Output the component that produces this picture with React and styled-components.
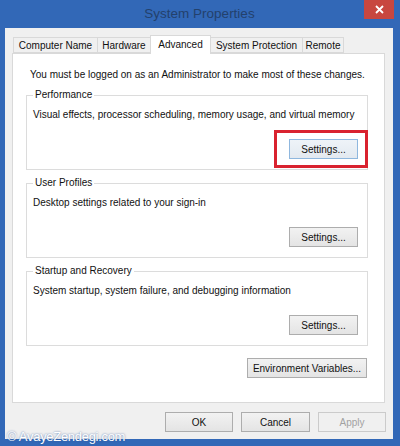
import React from 'react';
import styled, { createGlobalStyle } from 'styled-components';

const GlobalStyle = createGlobalStyle`
  html, body {
    margin: 0;
    padding: 0;
    background: #3268b7;
  }
  body {
    font-family: "Liberation Sans", Arial, sans-serif;
  }
`;

const Window = styled.div`
  position: relative;
  width: 400px;
  height: 446px;
  box-sizing: border-box;
  background: #3268b7;
  padding: 0 7px 7px 5px;
  display: flex;
  flex-direction: column;
`;

const TitleBar = styled.div`
  height: 28px;
  display: flex;
  align-items: flex-start;
`;

const Title = styled.div`
  flex: 1;
  padding-left: 30px;
  text-align: center;
  line-height: 28px;
  font-size: 13.5px;
  color: #23416c;
`;

const CloseButton = styled.div`
  width: 30px;
  height: 19px;
  margin-right: -1px;
  background: #c8473f;
  color: #fff;
  display: flex;
  align-items: center;
  justify-content: center;
`;

const Client = styled.div`
  flex: 1;
  background: #f0f0f0;
  display: flex;
  flex-direction: column;
  padding: 7px 8px 7px 7px;
`;

const TabRow = styled.div`
  height: 18px;
  display: flex;
  align-items: flex-end;
  margin-left: 1px;
  position: relative;
  z-index: 1;
`;

const Tab = styled.div`
  width: ${p => p.$w}px;
  height: ${p => (p.$active ? 19 : 16)}px;
  margin-bottom: ${p => (p.$active ? -1 : 0)}px;
  box-sizing: border-box;
  border: 1px solid #d9d9d9;
  border-bottom: ${p => (p.$active ? 'none' : '1px solid #d9d9d9')};
  margin-right: -1px;
  background: ${p => (p.$active ? '#ffffff' : '#f0f0f0')};
  font-size: 10px;
  color: #111;
  display: flex;
  align-items: ${p => (p.$active ? 'flex-start' : 'center')};
  padding-top: ${p => (p.$active ? 3 : 0)}px;
  justify-content: center;
  white-space: nowrap;
`;

const Panel = styled.div`
  height: 350px;
  box-sizing: border-box;
  background: #fff;
  border: 1px solid #d9d9d9;
  padding: 0 16px 0 13px;
  display: flex;
  flex-direction: column;
`;

const AdminText = styled.div`
  margin: 14px 0 7px 4px;
  line-height: 14px;
  font-size: 10px;
  color: #111;
  white-space: nowrap;
`;

const Group = styled.fieldset`
  margin: ${p => (p.$first ? 0 : 7)}px 0 0 0;
  border: 1px solid #dcdcdc;
  padding: 0 9px 10px 6px;
  display: flex;
  flex-direction: column;
`;

const Legend = styled.legend`
  padding: 0 2px;
  font-size: 10px;
  line-height: 12px;
  color: #111;
`;

const Desc = styled.div`
  margin-top: 7px;
  line-height: 14px;
  font-size: 10px;
  color: #111;
  white-space: nowrap;
`;

const ButtonSlot = styled.div`
  margin-top: 17px;
  align-self: flex-end;
  position: relative;

  ${p => p.$marked && `
    &::after {
      content: "";
      position: absolute;
      top: -9px;
      bottom: -9px;
      left: -15px;
      right: -10px;
      border: 3px solid #d9222f;
    }
  `}
`;

const Button = styled.div`
  width: ${p => p.$w || 69}px;
  height: 20px;
  box-sizing: border-box;
  border: 1px solid ${p => (p.$disabled ? '#cbcbcb' : p.$focus ? '#8fb7de' : '#adadad')};
  background: ${p =>
    p.$disabled
      ? '#f0f0f0'
      : p.$focus
      ? 'linear-gradient(#eef3f8, #e3e9f0)'
      : 'linear-gradient(#f2f2f2, #e4e4e4)'};
  color: ${p => (p.$disabled ? '#a2a2a2' : '#111')};
  font-size: 10px;
  display: flex;
  align-items: center;
  justify-content: center;
  white-space: nowrap;
`;

const EnvSlot = styled.div`
  margin-top: 12px;
  margin-right: 1px;
  align-self: flex-end;
`;

const ButtonRow = styled.div`
  margin-top: 9px;
  margin-right: -1px;
  display: flex;
  justify-content: flex-end;
  gap: 8px;
`;

const Watermark = styled.div`
  position: absolute;
  left: 7px;
  bottom: 2px;
  font-size: 13px;
  letter-spacing: -0.3px;
  color: #fff;
  text-shadow: 0 0 2px rgba(40, 80, 150, 0.8);
`;

const tabs = [
  { label: 'Computer Name', w: 85 },
  { label: 'Hardware', w: 54 },
  { label: 'Advanced', w: 61, active: true },
  { label: 'System Protection', w: 93 },
  { label: 'Remote', w: 42 },
];

const groups = [
  {
    title: 'Performance',
    desc: 'Visual effects, processor scheduling, memory usage, and virtual memory',
    marked: true,
  },
  { title: 'User Profiles', desc: 'Desktop settings related to your sign-in' },
  {
    title: 'Startup and Recovery',
    desc: 'System startup, system failure, and debugging information',
  },
];

export default function App() {
  return (
    <>
      <GlobalStyle />
      <Window>
        <TitleBar>
          <Title>System Properties</Title>
          <CloseButton>
            <svg width="9" height="9" viewBox="0 0 9 9">
              <path d="M1 1 L8 8 M8 1 L1 8" stroke="#fff" strokeWidth="1.8" />
            </svg>
          </CloseButton>
        </TitleBar>
        <Client>
          <TabRow>
            {tabs.map(t => (
              <Tab key={t.label} $w={t.w} $active={t.active}>
                {t.label}
              </Tab>
            ))}
          </TabRow>
          <Panel>
            <AdminText>
              You must be logged on as an Administrator to make most of these changes.
            </AdminText>
            {groups.map((g, i) => (
              <Group key={g.title} $first={i === 0}>
                <Legend>{g.title}</Legend>
                <Desc>{g.desc}</Desc>
                <ButtonSlot $marked={g.marked}>
                  <Button $focus={g.marked}>Settings...</Button>
                </ButtonSlot>
              </Group>
            ))}
            <EnvSlot>
              <Button $w={120}>Environment Variables...</Button>
            </EnvSlot>
          </Panel>
          <ButtonRow>
            <Button $w={68}>OK</Button>
            <Button $w={69}>Cancel</Button>
            <Button $w={68} $disabled>
              Apply
            </Button>
          </ButtonRow>
        </Client>
        <Watermark>© AvayeZendegi.com</Watermark>
      </Window>
    </>
  );
}
